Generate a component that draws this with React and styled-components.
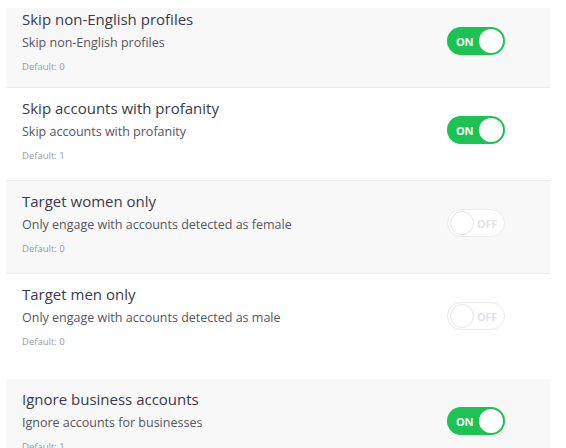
import React from "react";
import styled, { createGlobalStyle } from "styled-components";

const GlobalStyle = createGlobalStyle`
  html, body {
    margin: 0;
    padding: 0;
    background: #ffffff;
  }
  body {
    font-family: "Open Sans", "Noto Sans", sans-serif;
  }
`;

const settings = [
  {
    title: "Skip non-English profiles",
    desc: "Skip non-English profiles",
    def: 0,
    on: true,
    shade: true,
    first: true,
  },
  {
    title: "Skip accounts with profanity",
    desc: "Skip accounts with profanity",
    def: 1,
    on: true,
  },
  {
    title: "Target women only",
    desc: "Only engage with accounts detected as female",
    def: 0,
    on: false,
    shade: true,
  },
  {
    title: "Target men only",
    desc: "Only engage with accounts detected as male",
    def: 0,
    on: false,
    tall: true,
  },
  {
    title: "Ignore business accounts",
    desc: "Ignore accounts for businesses",
    def: 1,
    on: true,
    shade: true,
  },
];

const Toggle = ({ on }) => (
  <Switch on={on ? 1 : 0}>
    {on ? <SwitchLabel on={1}>ON</SwitchLabel> : null}
    <Knob on={on ? 1 : 0} />
    {!on ? <SwitchLabel on={0}>OFF</SwitchLabel> : null}
  </Switch>
);

const App = () => {
  return (
    <>
      <GlobalStyle />
      <Panel>
        {settings.map((item) => (
          <Row
            key={item.title}
            shade={item.shade ? 1 : 0}
            first={item.first ? 1 : 0}
            tall={item.tall ? 1 : 0}
          >
            <Info>
              <Title>{item.title}</Title>
              <Desc>{item.desc}</Desc>
              <Default>Default: {item.def}</Default>
            </Info>
            <Toggle on={item.on} />
          </Row>
        ))}
      </Panel>
    </>
  );
};

export default App;

const Panel = styled.div`
  margin: 8px 16px 0 6px;
  height: 440px;
  overflow: hidden;
  display: flex;
  flex-direction: column;
`;

const Row = styled.div`
  display: flex;
  align-items: center;
  justify-content: space-between;
  flex-shrink: 0;
  padding: ${(p) => (p.first ? "0" : "9px")} 45px
    ${(p) => (p.tall ? "30px" : p.first ? "13px" : "17px")} 16px;
  background: ${(p) => (p.shade ? "#f8f8f8" : "#ffffff")};
  border-bottom: ${(p) => (p.tall ? "none" : "1px solid #ececec")};
`;

const Info = styled.div`
  display: flex;
  flex-direction: column;
`;

const Title = styled.div`
  font-size: 15px;
  line-height: 22px;
  color: #3a3a48;
`;

const Desc = styled.div`
  margin-top: 3px;
  font-size: 12.5px;
  line-height: 20px;
  color: #55555f;
`;

const Default = styled.div`
  margin-top: 7px;
  font-size: 9.5px;
  line-height: 14px;
  color: #9a9aa0;
`;

const Switch = styled.div`
  box-sizing: border-box;
  width: 58px;
  height: 28px;
  border-radius: 14px;
  display: flex;
  align-items: center;
  justify-content: space-between;
  padding: 0 2px 0 ${(p) => (p.on ? "9px" : "2px")};
  background: ${(p) => (p.on ? "#1cc254" : "#ffffff")};
  border: ${(p) => (p.on ? "none" : "1px solid #ebebf0")};
`;

const Knob = styled.div`
  box-sizing: border-box;
  width: 24px;
  height: 24px;
  border-radius: 50%;
  background: #ffffff;
  border: ${(p) => (p.on ? "none" : "1.5px solid #e6e6ec")};
`;

const SwitchLabel = styled.span`
  font-family: "Open Sans", "Noto Sans", sans-serif;
  font-size: 11px;
  font-weight: 700;
  letter-spacing: -0.3px;
  color: ${(p) => (p.on ? "#ffffff" : "#e2e2e8")};
  margin-right: ${(p) => (p.on ? "0" : "5px")};
`;
